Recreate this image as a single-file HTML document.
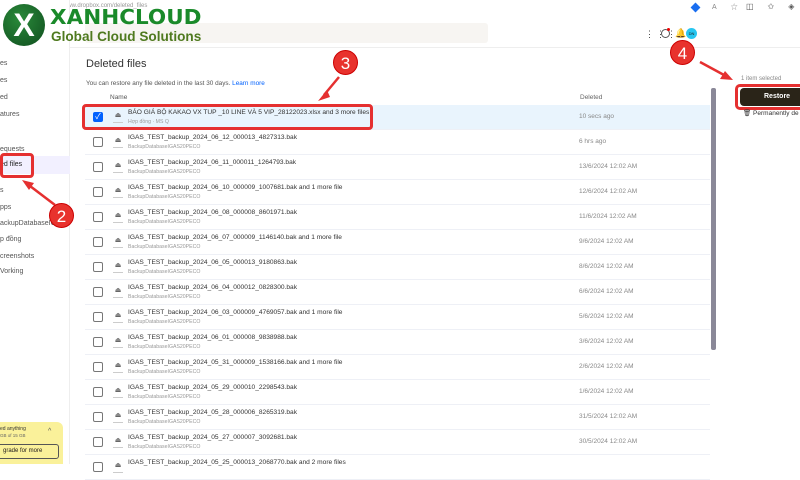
<!DOCTYPE html>
<html><head><meta charset="utf-8"><style>
*{margin:0;padding:0;box-sizing:border-box}
body{width:800px;height:464px;overflow:hidden;background:#fff;font-family:"Liberation Sans","Noto Sans CJK SC",sans-serif;position:relative;color:#1e1919}
.abs{position:absolute}
.side{left:0;top:0;width:70px;height:464px;border-right:1px solid #eee;background:#fff}
.side div{position:absolute;left:0;font-size:7px;color:#555}
.row{position:absolute;left:85px;width:625px;height:25px;border-bottom:1px solid #eef0f6}
.cb{position:absolute;left:8px;top:7px;width:10px;height:10px;border:1px solid #777;border-radius:2px;background:#fff}
.ic{position:absolute;left:28px;top:6px;width:10px;height:12px;color:#666;font-size:7px;text-align:center;border-bottom:1px solid #ccc}
.nm{position:absolute;left:43px;top:4px;font-size:6.6px;color:#333;white-space:nowrap}
.sb{position:absolute;left:43px;top:14px;font-size:5.2px;color:#999;white-space:nowrap}
.dt{position:absolute;left:494px;top:8px;font-size:6.5px;color:#888;white-space:nowrap}
.badge{position:absolute;width:25px;height:25px;border-radius:50%;background:#e8322d;color:#fff;font-size:17px;text-align:center;line-height:25px;border:1px solid #c00}
</style></head><body>
<div class="abs" style="left:0;top:0;width:800px;height:14px;background:#fff"></div>
<div class="abs" style="left:45px;top:3px;font-size:6px;color:#999">https://www.dropbox.com/deleted_files</div>
<div class="abs" style="left:85px;top:23px;width:403px;height:20px;background:#f7f5f2;border-radius:3px"></div>
<div class="abs" style="left:0;top:47px;width:800px;height:1px;background:#eee"></div>
<div class="abs side">
<div style="top:60px">es</div><div style="top:77px">es</div><div style="top:94px">ed</div><div style="top:111px">atures</div>
<div style="top:146px">equests</div>
<div style="top:156px;width:70px;height:18px;background:#f2f0ff"></div>
<div style="top:161px;color:#222">ed files</div>
<div style="top:187px">s</div><div style="top:204px">pps</div><div style="top:220px">ackupDatabaseIG</div><div style="top:236px">p đồng</div><div style="top:253px">creenshots</div><div style="top:268px">Vorking</div>
</div>
<div class="abs" style="left:0;top:153px;width:34px;height:25px;border:3px solid #e53030;border-radius:4px"></div>
<div class="abs" style="left:0;top:422px;width:63px;height:42px;background:#faf19a;border-radius:0 6px 0 0"></div>
<div class="abs" style="left:0;top:426px;font-size:5px;color:#333">ed anything</div>
<div class="abs" style="left:0;top:433px;font-size:4.5px;color:#666">GB of 15 GB</div>
<div class="abs" style="left:48px;top:428px;font-size:7px;color:#555">^</div>
<div class="abs" style="left:-4px;top:444px;width:63px;height:15px;border:1px solid #555;border-radius:3px;font-size:6px;line-height:13px;padding-left:6px">grade for more</div>

<div class="abs" style="left:86px;top:58px;font-size:11px;color:#333">Deleted files</div>
<div class="abs" style="left:86px;top:80px;font-size:6.4px;color:#555">You can restore any file deleted in the last 30 days. <span style="color:#0061fe">Learn more</span></div>
<div class="abs" style="left:110px;top:94px;font-size:6.5px;color:#555">Name</div>
<div class="abs" style="left:580px;top:94px;font-size:6.5px;color:#666">Deleted</div>

<div class="row" style="top:105px;background:#e9f4fd">
<div class="cb" style="background:#0061fe;border-color:#0061fe;color:#fff;font-size:8px;line-height:8px;text-align:center">✓</div>
<div class="ic">⏏</div><div class="nm">BÁO GIÁ BỘ KAKAO VX TUP _10 LINE VÀ 5 VIP_28122023.xlsx and 3 more files</div><div class="sb">Hợp đồng · MS Q</div><div class="dt">10 secs ago</div></div>
<div class="abs" style="left:82px;top:104px;width:291px;height:26px;border:3px solid #e53030;border-radius:4px"></div>

<div class="row" style="top:130px"><div class="cb"></div><div class="ic">⏏</div><div class="nm">IGAS_TEST_backup_2024_06_12_000013_4827313.bak</div><div class="sb">BackupDatabaseIGAS20PECO</div><div class="dt">6 hrs ago</div></div>
<div class="row" style="top:155px"><div class="cb"></div><div class="ic">⏏</div><div class="nm">IGAS_TEST_backup_2024_06_11_000011_1264793.bak</div><div class="sb">BackupDatabaseIGAS20PECO</div><div class="dt">13/6/2024 12:02 AM</div></div>
<div class="row" style="top:180px"><div class="cb"></div><div class="ic">⏏</div><div class="nm">IGAS_TEST_backup_2024_06_10_000009_1007681.bak and 1 more file</div><div class="sb">BackupDatabaseIGAS20PECO</div><div class="dt">12/6/2024 12:02 AM</div></div>
<div class="row" style="top:205px"><div class="cb"></div><div class="ic">⏏</div><div class="nm">IGAS_TEST_backup_2024_06_08_000008_8601971.bak</div><div class="sb">BackupDatabaseIGAS20PECO</div><div class="dt">11/6/2024 12:02 AM</div></div>
<div class="row" style="top:230px"><div class="cb"></div><div class="ic">⏏</div><div class="nm">IGAS_TEST_backup_2024_06_07_000009_1146140.bak and 1 more file</div><div class="sb">BackupDatabaseIGAS20PECO</div><div class="dt">9/6/2024 12:02 AM</div></div>
<div class="row" style="top:255px"><div class="cb"></div><div class="ic">⏏</div><div class="nm">IGAS_TEST_backup_2024_06_05_000013_9180863.bak</div><div class="sb">BackupDatabaseIGAS20PECO</div><div class="dt">8/6/2024 12:02 AM</div></div>
<div class="row" style="top:280px"><div class="cb"></div><div class="ic">⏏</div><div class="nm">IGAS_TEST_backup_2024_06_04_000012_0828300.bak</div><div class="sb">BackupDatabaseIGAS20PECO</div><div class="dt">6/6/2024 12:02 AM</div></div>
<div class="row" style="top:305px"><div class="cb"></div><div class="ic">⏏</div><div class="nm">IGAS_TEST_backup_2024_06_03_000009_4769057.bak and 1 more file</div><div class="sb">BackupDatabaseIGAS20PECO</div><div class="dt">5/6/2024 12:02 AM</div></div>
<div class="row" style="top:330px"><div class="cb"></div><div class="ic">⏏</div><div class="nm">IGAS_TEST_backup_2024_06_01_000008_9838988.bak</div><div class="sb">BackupDatabaseIGAS20PECO</div><div class="dt">3/6/2024 12:02 AM</div></div>
<div class="row" style="top:355px"><div class="cb"></div><div class="ic">⏏</div><div class="nm">IGAS_TEST_backup_2024_05_31_000009_1538166.bak and 1 more file</div><div class="sb">BackupDatabaseIGAS20PECO</div><div class="dt">2/6/2024 12:02 AM</div></div>
<div class="row" style="top:380px"><div class="cb"></div><div class="ic">⏏</div><div class="nm">IGAS_TEST_backup_2024_05_29_000010_2298543.bak</div><div class="sb">BackupDatabaseIGAS20PECO</div><div class="dt">1/6/2024 12:02 AM</div></div>
<div class="row" style="top:405px"><div class="cb"></div><div class="ic">⏏</div><div class="nm">IGAS_TEST_backup_2024_05_28_000006_8265319.bak</div><div class="sb">BackupDatabaseIGAS20PECO</div><div class="dt">31/5/2024 12:02 AM</div></div>
<div class="row" style="top:430px"><div class="cb"></div><div class="ic">⏏</div><div class="nm">IGAS_TEST_backup_2024_05_27_000007_3092681.bak</div><div class="sb">BackupDatabaseIGAS20PECO</div><div class="dt">30/5/2024 12:02 AM</div></div>
<div class="row" style="top:455px"><div class="cb"></div><div class="ic">⏏</div><div class="nm">IGAS_TEST_backup_2024_05_25_000013_2068770.bak and 2 more files</div></div>

<div class="abs" style="left:711px;top:88px;width:5px;height:262px;background:#8a8898;border-radius:2px"></div>

<div class="abs" style="left:741px;top:76px;font-size:6px;color:#888">1 item selected</div>
<div class="abs" style="left:735px;top:84px;width:70px;height:26px;border:3px solid #e53030;border-radius:5px;background:#fff"></div>
<div class="abs" style="left:740px;top:88px;width:70px;height:18px;background:#2a2418;border-radius:4px;color:#fff;font-size:7px;font-weight:bold;line-height:18px;padding-left:24px">Restore</div>
<div class="abs" style="left:743px;top:109px;font-size:6.5px;color:#333;white-space:nowrap">🗑 Permanently de</div>

<div class="abs" style="left:645px;top:29px;font-size:9px;color:#444;letter-spacing:2px">⋮⋮⋮</div>
<div class="abs" style="left:661px;top:29px;width:9px;height:9px;border:1px solid #555;border-radius:50%"></div>
<div class="abs" style="left:667px;top:28px;width:3px;height:3px;background:#e00;border-radius:50%"></div>
<div class="abs" style="left:675px;top:28px;font-size:9px;color:#444">🔔</div>
<div class="abs" style="left:686px;top:28px;width:11px;height:11px;background:#27c6f0;border-radius:50%;font-size:4px;line-height:11px;text-align:center">DN</div>
<div class="abs" style="left:692px;top:4px;width:7px;height:7px;background:#1a6ef0;transform:rotate(45deg)"></div>
<div class="abs" style="left:712px;top:2px;font-size:7px;color:#888;letter-spacing:14px">A☆</div>
<div class="abs" style="left:746px;top:2px;font-size:8px;color:#555;letter-spacing:14px">◫✩◈</div>

<div class="abs" style="left:3px;top:4px;width:42px;height:42px;border-radius:50%;background:radial-gradient(circle at 40% 35%,#2a8a3a,#0f4d1e);color:#fff;font-size:32px;font-weight:bold;text-align:center;line-height:42px">X</div>
<div class="abs" style="left:50px;top:5px;font-size:25px;font-weight:bold;color:#1a8a2a;font-family:'DejaVu Sans',sans-serif;transform:scale(0.86,0.82);transform-origin:top left">XANHCLOUD</div>
<div class="abs" style="left:51px;top:29px;font-size:13.6px;font-weight:bold;color:#4f7a1f">Global Cloud Solutions</div>

<div class="badge" style="left:333px;top:50px">3</div>
<svg class="abs" style="left:0;top:0" width="800" height="464">
<g stroke="#e53030" stroke-width="2.5" fill="#e53030">
<line x1="339" y1="77" x2="324" y2="95"/><polygon points="318,101 327,90 330,97" stroke="none"/>
<line x1="55" y1="205" x2="30" y2="186"/><polygon points="22,180 34,183 29,190" stroke="none"/>
<line x1="700" y1="62" x2="724" y2="75"/><polygon points="733,80 720,79 725,71" stroke="none"/>
</g></svg>
<div class="badge" style="left:49px;top:203px">2</div>
<div class="badge" style="left:670px;top:40px">4</div>
</body></html>
